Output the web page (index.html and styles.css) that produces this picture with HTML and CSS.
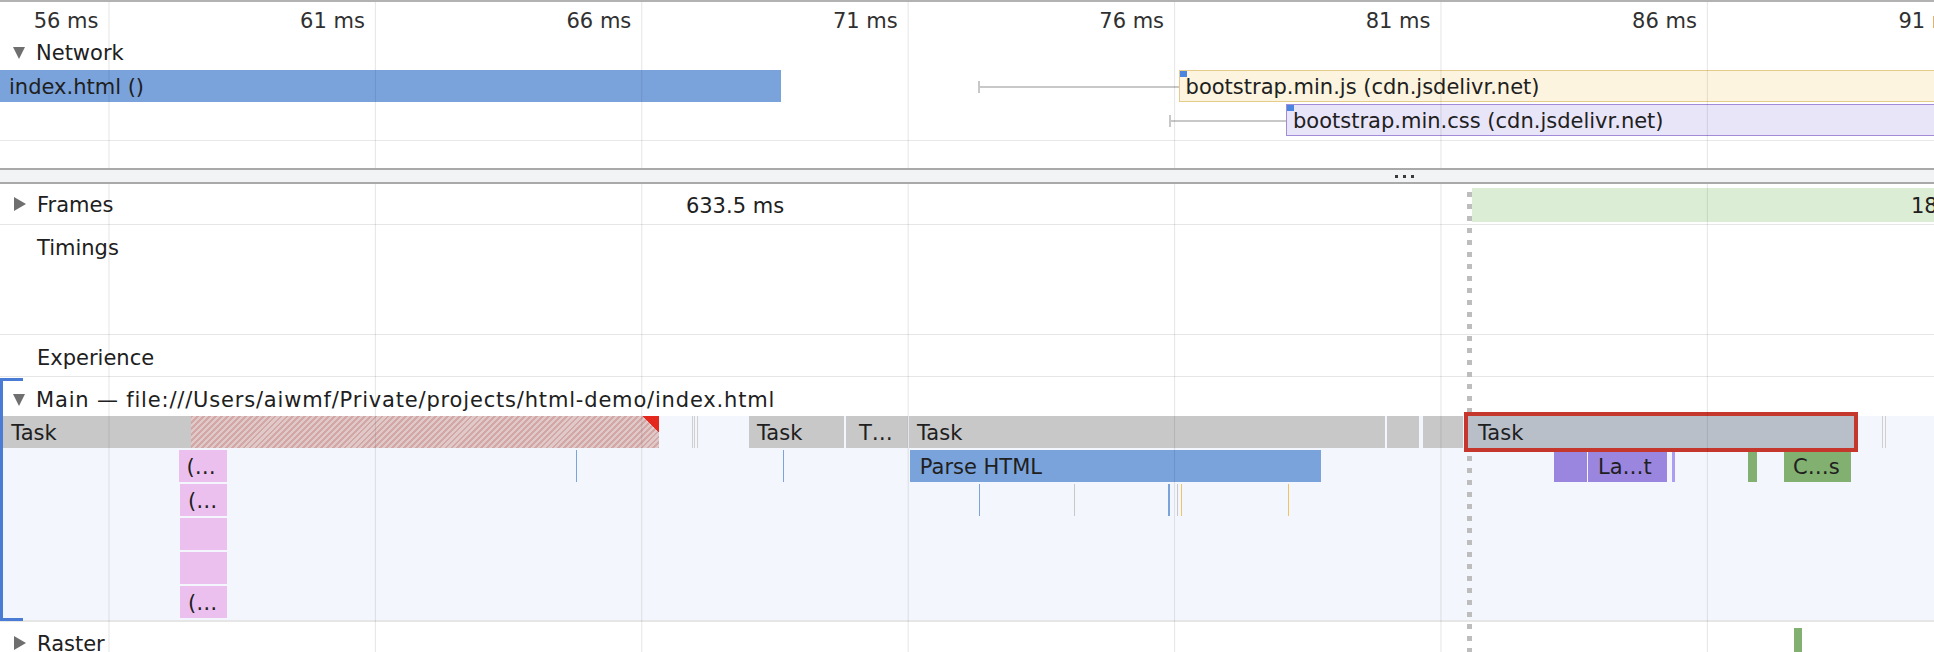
FILE: index.html
```html
<!DOCTYPE html>
<html lang="en">
<head>
<meta charset="utf-8">
<title>Performance</title>
<link rel="stylesheet" href="styles.css">
</head>
<body>
<div class="perf">
  <section class="net">
    <div class="ruler">
      <span class="tick tick-first">56 ms</span>
      <span class="tick">61 ms</span>
      <span class="tick">66 ms</span>
      <span class="tick">71 ms</span>
      <span class="tick">76 ms</span>
      <span class="tick">81 ms</span>
      <span class="tick">86 ms</span>
      <span class="tick">91 ms</span>
    </div>
    <div class="label net-head"><span class="tri-down"></span>Network</div>
    <div class="net-row">
      <div class="nbar doc" style="left:0;width:781px">index.html ()</div>
      <div class="whisker" style="left:978px;width:201px"></div>
      <div class="nbar js" style="left:1178.6px;width:800px"><i class="mark"></i>bootstrap.min.js (cdn.jsdelivr.net)</div>
    </div>
    <div class="net-row">
      <div class="whisker" style="left:1168.5px;width:118px"></div>
      <div class="nbar css" style="left:1286px;width:700px"><i class="mark"></i>bootstrap.min.css (cdn.jsdelivr.net)</div>
    </div>
    <div class="net-rest"></div>
    <div class="grid"></div>
  </section>

  <div class="divider"><span class="grip"></span></div>

  <section class="flame">
    <div class="row frames">
      <div class="label"><span class="tri-right"></span>Frames</div>
      <div class="frame" style="left:0;width:1470px">633.5 ms</div>
      <div class="frame frame-green" style="left:1472px;right:0">18</div>
    </div>
    <div class="row timings label plain">Timings</div>
    <div class="row experience label plain">Experience</div>
    <div class="main-group">
      <div class="label main-head"><span class="tri-down"></span><span class="main-title">Main — file:///Users/aiwmf/Private/projects/html-demo/index.html</span></div>
      <div class="main-track">
        <div class="frow">
          <div class="fbar task long" style="left:3.3px;width:655.7px">Task<span class="hatch" style="left:187.3px"></span></div>
          <div class="fbar slivers" style="left:692px;width:7px"></div>
          <div class="fbar task" style="left:749px;width:95px">Task</div>
          <div class="fbar task" style="left:846px;width:2.5px"></div>
          <div class="fbar task" style="left:851px;width:56.6px">T…</div>
          <div class="fbar task" style="left:909px;width:476px">Task</div>
          <div class="fbar task" style="left:1387px;width:32px"></div>
          <div class="fbar task" style="left:1423px;width:39.5px"></div>
          <div class="fbar task selected" style="left:1468px;width:386px">Task</div>
          <div class="fbar slivers" style="left:1882px;width:5px"></div>
        </div>
        <div class="frow">
          <div class="fbar fn" style="left:178.5px;width:48.8px">(…</div>
          <div class="fbar line blue" style="left:576px;width:1px"></div>
          <div class="fbar line blue" style="left:782.5px;width:1px"></div>
          <div class="fbar parse" style="left:909.8px;width:411.2px">Parse HTML</div>
          <div class="fbar layout" style="left:1554px;width:33px"></div>
          <div class="fbar layout" style="left:1588px;width:79px">La…t</div>
          <div class="fbar layout-thin" style="left:1672px;width:3px"></div>
          <div class="fbar paint" style="left:1748px;width:3px"></div>
          <div class="fbar paint" style="left:1784px;width:67px">C…s</div>
        </div>
        <div class="frow">
          <div class="fbar fn" style="left:180px;width:47.3px">(…</div>
          <div class="fbar line blue" style="left:979px;width:1.3px"></div>
          <div class="fbar line gray" style="left:1074px;width:1px"></div>
          <div class="fbar line blue" style="left:1168px;width:2px"></div>
          <div class="fbar line gray" style="left:1176.8px;width:1px"></div>
          <div class="fbar line orange" style="left:1180.8px;width:1px"></div>
          <div class="fbar line orange" style="left:1288px;width:1px"></div>
        </div>
        <div class="frow">
          <div class="fbar fn" style="left:180px;width:47.3px"></div>
        </div>
        <div class="frow">
          <div class="fbar fn" style="left:180px;width:47.3px"></div>
        </div>
        <div class="frow">
          <div class="fbar fn" style="left:180px;width:47.3px">(…</div>
        </div>
      </div>
    </div>
    <div class="row raster">
      <div class="label"><span class="tri-right"></span>Raster</div>
      <div class="raster-bar" style="left:1794px;width:8px"></div>
    </div>
    <div class="cursor" style="left:1467px"></div>
    <div class="grid"></div>
  </section>
</div>
</body>
</html>
```

FILE: styles.css
```css
* { box-sizing: border-box; }
html, body { margin: 0; padding: 0; }
body {
  width: 1934px;
  height: 652px;
  overflow: hidden;
  background: #ffffff;
  font-family: "DejaVu Sans", "Noto Sans", sans-serif;
  font-size: 21px;
  color: #202020;
}

.perf { display: flex; flex-direction: column; width: 1934px; }

/* ---------- grid overlay ---------- */
.grid {
  position: absolute;
  inset: 0;
  pointer-events: none;
  z-index: 6;
  background-image: linear-gradient(to right, rgba(0, 0, 0, 0.1) 0 1px, transparent 1px);
  background-size: 266.4px 100%;
  background-position: 108.5px 0;
  background-repeat: repeat-x;
}

/* ---------- network section ---------- */
.net {
  position: relative;
  height: 168px;
  border-top: 2px solid #b2b2b2;
  display: flex;
  flex-direction: column;
  flex-shrink: 0;
}
.ruler {
  display: flex;
  height: 36px;
  padding-top: 7px;
  line-height: 24px;
  color: #303030;
  white-space: nowrap;
  overflow: hidden;
  flex-shrink: 0;
}
.tick { flex: 0 0 266.4px; text-align: right; padding-right: 10px; }
.tick-first { flex-basis: 108.5px; }

.label { line-height: 24px; white-space: nowrap; }
.label.plain { padding-left: 37px; }
.net-head { height: 31px; padding-top: 3px; flex-shrink: 0; }

.tri-down {
  display: inline-block;
  width: 0; height: 0;
  border-left: 6.5px solid transparent;
  border-right: 6.5px solid transparent;
  border-top: 12px solid #6f6f6f;
  margin: 0 11px 1px 13px;
}
.tri-right {
  display: inline-block;
  width: 0; height: 0;
  border-top: 7px solid transparent;
  border-bottom: 7px solid transparent;
  border-left: 12px solid #6f6f6f;
  margin: 0 11px 1px 14px;
}

.net-row { position: relative; height: 34px; flex-shrink: 0; }
.nbar {
  position: absolute;
  top: 1px;
  height: 32px;
  line-height: 32px;
  padding-left: 6px;
  white-space: nowrap;
  overflow: hidden;
  color: #202020;
}
.nbar.doc { background: #7aa3dc; line-height: 34px; padding-left: 9px; }
.nbar.js { background: #fcf4de; border: 1px solid #e5cc8a; border-right: 0; }
.nbar.css { background: #e9e5f8; border: 1px solid #a08cd8; border-right: 0; }
.mark {
  position: absolute;
  left: 0; top: 0;
  width: 7px; height: 6px;
  background: #4a86df;
}
.whisker {
  position: absolute;
  top: 17px;
  height: 2px;
  background: #c8c8c8;
}
.whisker::before {
  content: "";
  position: absolute;
  left: 0; top: -5px;
  width: 2px; height: 12px;
  background: #c8c8c8;
}
.net-rest { flex: 1; margin-top: 3px; border-top: 1px solid #e8e8e8; }

/* ---------- divider ---------- */
.divider {
  height: 16px;
  flex-shrink: 0;
  border-top: 2px solid #a9a9a9;
  border-bottom: 2px solid #a9a9a9;
  background: #f1f3f4;
  display: flex;
  align-items: center;
  padding-left: 1395px;
}
.grip {
  width: 19px;
  height: 3px;
  background: repeating-linear-gradient(to right, #3a3a3a 0 3px, transparent 3px 8px);
}

/* ---------- flame section ---------- */
.flame {
  position: relative;
  height: 468px;
  display: flex;
  flex-direction: column;
  flex-shrink: 0;
}
.row { position: relative; flex-shrink: 0; border-bottom: 1px solid #e6e6e6; }
.frames { height: 41px; }
.frames > .label { line-height: 40px; padding-top: 1px; }
.frame {
  position: absolute;
  top: 4px;
  height: 34px;
  line-height: 36px;
  text-align: center;
  white-space: nowrap;
  overflow: hidden;
  color: #202020;
}
.frame-green { background: #dcedd5; text-align: left; padding-left: 439px; }

.timings { height: 110px; padding-top: 11px; }
.experience { height: 42px; padding-top: 11px; }

.main-group { position: relative; flex-shrink: 0; border-bottom: 2px solid #e6e6e6; }
.main-group::before {
  content: "";
  position: absolute;
  left: 0; top: 1px; bottom: -1px;
  width: 20px;
  border: 3px solid #4a7bd5;
  border-right: 0;
  z-index: 2;
}
.main-head { height: 39px; padding-top: 11px; }
.main-title { letter-spacing: 0.82px; }
.main-track {
  height: 204px;
  background: #f3f7fd;
  display: flex;
  flex-direction: column;
}
.frow { position: relative; height: 34px; flex-shrink: 0; }
.fbar {
  position: absolute;
  top: 0;
  height: 32px;
  line-height: 34px;
  padding-left: 8px;
  white-space: nowrap;
  overflow: hidden;
  color: #202020;
}
.task { background: #c8c8c8; }
.long { overflow: visible; }
.hatch {
  position: absolute;
  top: 0; bottom: 0; right: 0;
  background: repeating-linear-gradient(135deg, #d4a7a7 0 2px, #e0c9c9 2px 4.2px);
}
.long::after {
  content: "";
  position: absolute;
  right: 0; top: 0;
  width: 16px; height: 16px;
  background: linear-gradient(to bottom left, #e5281d 50%, transparent 50%);
}
.slivers {
  padding: 0;
  background: repeating-linear-gradient(to right, #cfcfcf 0 1px, transparent 1px 2.5px);
}
.selected {
  background: #b9bfc9;
  outline: 4px solid #c5372c;
  padding-left: 10px;
  z-index: 4;
}
.fn { background: #ecc0ee; }
.parse { background: #7aa3dc; padding-left: 10px; }
.layout { background: #9a86de; padding-left: 10px; }
.layout-thin { background: #ad9df0; padding: 0; }
.paint { background: #82b070; padding-left: 9px; }
.line { padding: 0; }
.line.blue { background: #7aa3dc; }
.line.gray { background: #c8c8c8; }
.line.orange { background: #f0c35e; }

.raster { height: 30px; border-bottom: 0; padding-top: 10px; }
.raster-bar {
  position: absolute;
  top: 6px;
  height: 40px;
  background: #82b070;
}

.cursor {
  position: absolute;
  top: 8px;
  bottom: 0;
  width: 5px;
  background: repeating-linear-gradient(to bottom, #bdbdbd 0 5px, transparent 5px 12px);
  z-index: 3;
}
```
